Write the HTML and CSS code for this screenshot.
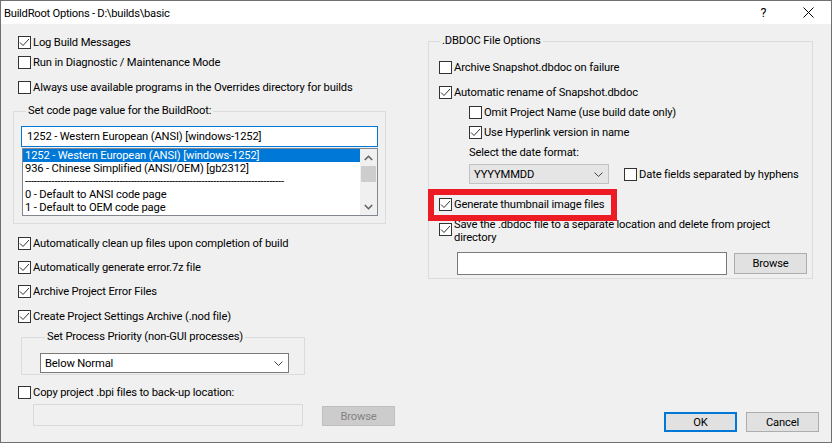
FILE: index.html
```html
<!DOCTYPE html>
<html>
<head>
<meta charset="utf-8">
<title>BuildRoot Options</title>
<link rel="stylesheet" href="styles.css">
</head>
<body>
<div class="window">
  <div class="titlebar">
    <span class="title">BuildRoot Options - D:\builds\basic</span>
    <span class="cap-btn help">?</span>
    <span class="cap-btn close"><svg width="11" height="11" viewBox="0 0 11 11"><path d="M0.5 0.5 L10.5 10.5 M10.5 0.5 L0.5 10.5" stroke="#000" stroke-width="1" fill="none"/></svg></span>
  </div>
  <div class="client">
    <div class="col col-left">
      <div class="chk m12"><span class="box"><svg width="11" height="11" viewBox="0 0 11 11"><path d="M1 5.5 L4 8.5 L10 2" stroke="#333" fill="none"/></svg></span><span class="lbl">Log Build Messages</span></div>
      <div class="chk m7"><span class="box"></span><span class="lbl">Run in Diagnostic / Maintenance Mode</span></div>
      <div class="chk m12"><span class="box"></span><span class="lbl">Always use available programs in the Overrides directory for builds</span></div>

      <fieldset class="grp grp-codepage">
        <legend>Set code page value for the BuildRoot:</legend>
        <div class="combo-edit">1252 - Western European (ANSI) [windows-1252]</div>
        <div class="listbox">
          <div class="items">
            <div class="item sel">1252 - Western European (ANSI) [windows-1252]</div>
            <div class="item">936 - Chinese Simplified (ANSI/OEM) [gb2312]</div>
            <div class="item">----------------------------------------------------------------------------------------</div>
            <div class="item">0 - Default to ANSI code page</div>
            <div class="item">1 - Default to OEM code page</div>
          </div>
          <div class="vscroll">
            <div class="sb-btn"><svg width="9" height="6" viewBox="0 0 9 6"><path d="M0.8 5 L4.5 1.3 L8.2 5" stroke="#606060" stroke-width="1.6" fill="none"/></svg></div>
            <div class="sb-thumb"></div>
            <div class="sb-track"></div>
            <div class="sb-btn"><svg width="9" height="6" viewBox="0 0 9 6"><path d="M0.8 1 L4.5 4.7 L8.2 1" stroke="#606060" stroke-width="1.6" fill="none"/></svg></div>
          </div>
        </div>
      </fieldset>

      <div class="chk m13"><span class="box"><svg width="11" height="11" viewBox="0 0 11 11"><path d="M1 5.5 L4 8.5 L10 2" stroke="#333" fill="none"/></svg></span><span class="lbl">Automatically clean up files upon completion of build</span></div>
      <div class="chk m11"><span class="box"><svg width="11" height="11" viewBox="0 0 11 11"><path d="M1 5.5 L4 8.5 L10 2" stroke="#333" fill="none"/></svg></span><span class="lbl">Automatically generate error.7z file</span></div>
      <div class="chk m11"><span class="box"><svg width="11" height="11" viewBox="0 0 11 11"><path d="M1 5.5 L4 8.5 L10 2" stroke="#333" fill="none"/></svg></span><span class="lbl">Archive Project Error Files</span></div>
      <div class="chk m12"><span class="box"><svg width="11" height="11" viewBox="0 0 11 11"><path d="M1 5.5 L4 8.5 L10 2" stroke="#333" fill="none"/></svg></span><span class="lbl">Create Project Settings Archive (.nod file)</span></div>

      <fieldset class="grp grp-priority">
        <legend>Set Process Priority (non-GUI processes)</legend>
        <div class="dropdown dd-priority"><span>Below Normal</span><svg width="9" height="5" viewBox="0 0 9 5"><path d="M0.5 0.5 L4.5 4.5 L8.5 0.5" stroke="#444" fill="none"/></svg></div>
      </fieldset>

      <div class="chk m11"><span class="box"></span><span class="lbl">Copy project .bpi files to back-up location:</span></div>
      <div class="path-row left-path">
        <div class="field disabled"></div>
        <div class="btn btn-disabled">Browse</div>
      </div>
    </div>

    <div class="col col-right">
      <fieldset class="grp grp-dbdoc">
        <legend>.DBDOC File Options</legend>
        <div class="chk m13"><span class="box"></span><span class="lbl">Archive Snapshot.dbdoc on failure</span></div>
        <div class="chk m12"><span class="box"><svg width="11" height="11" viewBox="0 0 11 11"><path d="M1 5.5 L4 8.5 L10 2" stroke="#333" fill="none"/></svg></span><span class="lbl">Automatic rename of Snapshot.dbdoc</span></div>
        <div class="chk m7 indent"><span class="box"></span><span class="lbl">Omit Project Name (use build date only)</span></div>
        <div class="chk m7 indent"><span class="box"><svg width="11" height="11" viewBox="0 0 11 11"><path d="M1 5.5 L4 8.5 L10 2" stroke="#333" fill="none"/></svg></span><span class="lbl">Use Hyperlink version in name</span></div>
        <div class="plain m7 indent">Select the date format:</div>
        <div class="date-row indent">
          <div class="dropdown dd-date"><span>YYYYMMDD</span><svg width="9" height="5" viewBox="0 0 9 5"><path d="M0.5 0.5 L4.5 4.5 L8.5 0.5" stroke="#444" fill="none"/></svg></div>
          <div class="chk"><span class="box"></span><span class="lbl">Date fields separated by hyphens</span></div>
        </div>
        <div class="highlight">
          <div class="chk"><span class="box"><svg width="11" height="11" viewBox="0 0 11 11"><path d="M1 5.5 L4 8.5 L10 2" stroke="#333" fill="none"/></svg></span><span class="lbl">Generate thumbnail image files</span></div>
        </div>
        <div class="chk-multi"><span class="box"><svg width="11" height="11" viewBox="0 0 11 11"><path d="M1 5.5 L4 8.5 L10 2" stroke="#333" fill="none"/></svg></span><span class="lbl">Save the .dbdoc file to a separate location and delete from project directory</span></div>
        <div class="path-row right-path">
          <div class="field"></div>
          <div class="btn">Browse</div>
        </div>
      </fieldset>
      <div class="footer">
        <div class="btn btn-default">OK</div>
        <div class="btn">Cancel</div>
      </div>
    </div>
  </div>
</div>
</body>
</html>
```

FILE: styles.css
```css
* { box-sizing: border-box; }
html, body { margin: 0; padding: 0; }
body {
  font-family: Roboto, "Segoe UI", "Liberation Sans", sans-serif;
  font-size: 11.2px;
  letter-spacing: -0.15px;
  color: #000;
  background: #fff;
}
.window {
  width: 832px;
  height: 443px;
  border: 1px solid #707070;
  background: #f0f0f0;
  display: flex;
  flex-direction: column;
}
.titlebar {
  flex: none;
  height: 23px;
  background: #fff;
  display: flex;
  align-items: center;
  padding-left: 3px;
}
.title { flex: 1; white-space: nowrap; line-height: 14px; font-size: 11.2px; letter-spacing: -0.25px; padding-top: 2px; }
.cap-btn {
  width: 45px;
  height: 23px;
  display: flex;
  align-items: center;
  justify-content: center;
}
.help { font-size: 12.5px; }
.close svg { display: block; }

.client {
  flex: 1;
  display: grid;
  grid-template-columns: 373px 391px;
  column-gap: 42px;
  padding: 0 12px;
}
.col { display: flex; flex-direction: column; align-items: flex-start; }

.chk {
  display: flex;
  align-items: center;
  gap: 2px;
  height: 13px;
  line-height: 13px;
  white-space: nowrap;
}
.col-left > .chk { margin-left: 5px; }
.box {
  flex: none;
  width: 13px;
  height: 13px;
  border: 1px solid #333;
  background: #fff;
}
.box svg { display: block; }
.m7 { margin-top: 7px; }
.m11 { margin-top: 11px; }
.m12 { margin-top: 12px; }
.m13 { margin-top: 13px; }

fieldset.grp {
  margin: 0;
  padding: 0;
  border: 1px solid #dcdcdc;
  min-width: 0;
}
fieldset.grp legend {
  margin-left: 5px;
  padding: 0 2px;
  line-height: 14px;
  height: 14px;
  white-space: nowrap;
}

.grp-codepage {
  width: 373px;
  margin-top: 10px !important;
  padding: 8px 7px 7px 7px !important;
}
.combo-edit {
  width: 357px;
  height: 21px;
  border: 1px solid #0078d7;
  background: #fff;
  padding-left: 5px;
  line-height: 19px;
  white-space: nowrap;
}
.listbox {
  margin-top: 1px;
  margin-left: 1px;
  width: 356px;
  height: 68px;
  border: 1px solid #828790;
  background: #fff;
  display: flex;
}
.items { flex: 1; overflow: hidden; }
.item {
  height: 13px;
  line-height: 13px;
  padding-left: 2px;
  white-space: nowrap;
  overflow: hidden;
}
.item.sel { background: #0078d7; color: #fff; }
.vscroll {
  width: 17px;
  flex: none;
  background: #f0f0f0;
  display: flex;
  flex-direction: column;
}
.sb-btn {
  height: 17px;
  display: flex;
  align-items: center;
  justify-content: center;
}
.sb-btn svg { display: block; }
.sb-thumb { height: 16px; margin: 0 1px; background: #cdcdcd; }
.sb-track { flex: 1; }

.grp-priority {
  width: 284px;
  margin: 7px 0 0 8px !important;
  padding: 9px 0 1px 18px !important;
}
.dropdown {
  height: 20px;
  display: flex;
  align-items: center;
  justify-content: space-between;
  white-space: nowrap;
}
.dropdown svg { display: block; }
.dd-priority {
  width: 249px;
  border: 1px solid #7a7a7a;
  background: #fff;
  padding: 0 5px 0 4px;
}

.path-row { display: flex; }
.left-path { margin: 5px 0 0 20px; align-items: flex-end; }
.field {
  background: #fff;
  border: 1px solid #7a7a7a;
}
.field.disabled {
  width: 270px;
  height: 22px;
  background: #f0f0f0;
  border: 1px solid #d9d9d9;
}
.btn {
  width: 73px;
  height: 21px;
  border: 1px solid #adadad;
  background: #e1e1e1;
  display: flex;
  align-items: center;
  justify-content: center;
  white-space: nowrap;
}
.btn-disabled {
  margin-left: 19px;
  height: 20px;
  background: #cccccc;
  border-color: #bfbfbf;
  color: #838383;
}

.grp-dbdoc {
  width: 385px;
  margin-top: 10px !important;
  padding: 0 0 3px 10px !important;
}
.grp-dbdoc legend { margin-left: 1px !important; }
.indent { margin-left: 30px; }
.plain { line-height: 14px; height: 14px; white-space: nowrap; }
.date-row { display: flex; align-items: center; margin-top: 4px; }
.dd-date {
  width: 140px;
  background: #e5e5e5;
  border: 1px solid #c2c2c2;
  padding: 0 5px 0 4px;
}
.date-row .chk { margin-left: 15px; }
.highlight {
  position: relative;
  z-index: 1;
  margin: 5px 0 0 -11px;
  width: 189px;
  height: 32px;
  border: 6px solid #ed1c24;
  padding: 3px 0 0 5px;
}
.chk-multi {
  margin-top: -3px;
  display: flex;
  align-items: flex-start;
  gap: 2px;
  line-height: 13px;
}
.chk-multi .box { margin-top: 5px; }
.chk-multi .lbl { width: 330px; }
.right-path { margin: 8px 0 0 18px; align-items: center; }
.right-path .field { width: 270px; height: 23px; }
.right-path .btn { margin-left: 7px; }

.footer {
  margin-top: auto;
  margin-bottom: 10px;
  align-self: stretch;
  display: flex;
  justify-content: flex-end;
  gap: 9px;
}
.footer .btn { height: 20px; }
.btn-default { border: 2px solid #0078d7; }
```
